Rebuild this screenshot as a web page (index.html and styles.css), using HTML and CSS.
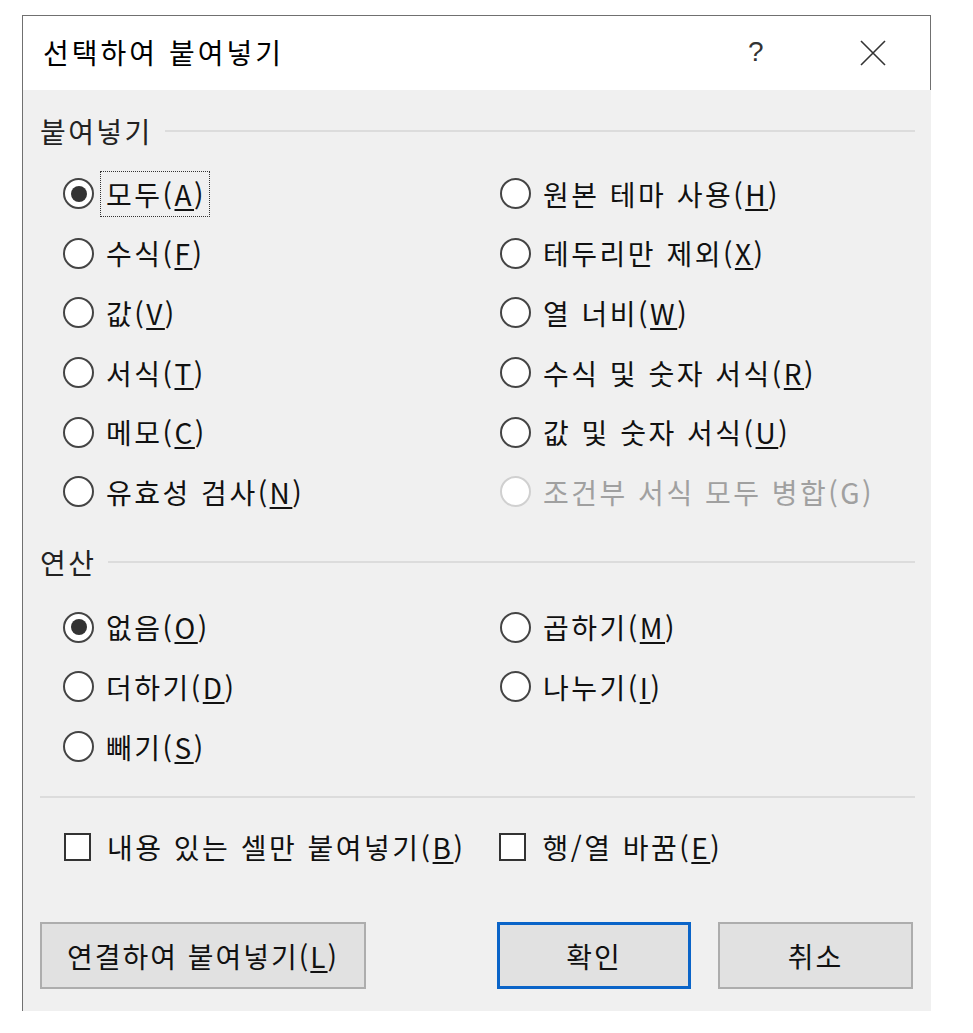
FILE: index.html
```html
<!DOCTYPE html>
<html lang="ko">
<head>
<meta charset="utf-8">
<title>선택하여 붙여넣기</title>
<link rel="stylesheet" href="styles.css">
</head>
<body>
<div class="dialog">
  <div class="titlebar">
    <div class="title">선택하여 붙여넣기</div>
    <div class="help">?</div>
    <div class="close">
      <svg width="26" height="26" viewBox="0 0 26 26"><path d="M1 1 L25 25 M25 1 L1 25" stroke="#333" stroke-width="1.6" fill="none"/></svg>
    </div>
  </div>
  <div class="body">
    <div class="section-head"><span class="section-label">붙여넣기</span><span class="rule"></span></div>
    <div class="grid grid-paste">
      <div class="opt"><span class="radio checked"></span><span class="label focus">모두(<u>A</u>)</span></div>
      <div class="opt"><span class="radio"></span><span class="label">원본 테마 사용(<u>H</u>)</span></div>
      <div class="opt"><span class="radio"></span><span class="label">수식(<u>F</u>)</span></div>
      <div class="opt"><span class="radio"></span><span class="label">테두리만 제외(<u>X</u>)</span></div>
      <div class="opt"><span class="radio"></span><span class="label">값(<u>V</u>)</span></div>
      <div class="opt"><span class="radio"></span><span class="label">열 너비(<u>W</u>)</span></div>
      <div class="opt"><span class="radio"></span><span class="label">서식(<u>T</u>)</span></div>
      <div class="opt"><span class="radio"></span><span class="label">수식 및 숫자 서식(<u>R</u>)</span></div>
      <div class="opt"><span class="radio"></span><span class="label">메모(<u>C</u>)</span></div>
      <div class="opt"><span class="radio"></span><span class="label">값 및 숫자 서식(<u>U</u>)</span></div>
      <div class="opt"><span class="radio"></span><span class="label">유효성 검사(<u>N</u>)</span></div>
      <div class="opt disabled"><span class="radio"></span><span class="label">조건부 서식 모두 병합(G)</span></div>
    </div>
    <div class="section-head second"><span class="section-label">연산</span><span class="rule"></span></div>
    <div class="grid grid-op">
      <div class="opt"><span class="radio checked"></span><span class="label">없음(<u>O</u>)</span></div>
      <div class="opt"><span class="radio"></span><span class="label">곱하기(<u>M</u>)</span></div>
      <div class="opt"><span class="radio"></span><span class="label">더하기(<u>D</u>)</span></div>
      <div class="opt"><span class="radio"></span><span class="label">나누기(<u>I</u>)</span></div>
      <div class="opt"><span class="radio"></span><span class="label">빼기(<u>S</u>)</span></div>
    </div>
    <div class="separator"></div>
    <div class="checks">
      <div class="chk"><span class="box"></span><span class="chk-label">내용 있는 셀만 붙여넣기(<u>B</u>)</span></div>
      <div class="chk"><span class="box"></span><span class="chk-label">행/열 바꿈(<u>E</u>)</span></div>
    </div>
    <div class="buttons">
      <button class="btn btn-link">연결하여 붙여넣기(<u>L</u>)</button>
      <span class="spacer"></span>
      <button class="btn btn-ok">확인</button>
      <button class="btn btn-cancel">취소</button>
    </div>
  </div>
</div>
</body>
</html>
```
FILE: styles.css
```css
* { box-sizing: border-box; }
html, body { margin: 0; padding: 0; background: #ffffff; }
body {
  font-family: "Noto Sans CJK KR", "Noto Sans", "Liberation Sans", sans-serif;
  color: #111;
}
.dialog {
  margin: 15px 0 0 22px;
  width: 909px;
  border-left: 1px solid #707070;
  border-top: 1px solid #707070;
}
.titlebar {
  height: 74px;
  background: #fff;
  border-right: 1px solid #707070;
  display: flex;
  align-items: center;
  padding-left: 20px;
}
.title {
  font-size: 28px;
  letter-spacing: 3px;
  color: #000;
  flex: 1;
  line-height: 1;
  margin-top: -2px;
}
.help {
  font-size: 28px;
  font-family: "Liberation Sans", sans-serif;
  color: #333;
  width: 30px;
  margin-right: 82px;
  line-height: 1;
  margin-top: -2px;
}
.close {
  width: 26px;
  height: 26px;
  margin-right: 44px;
  display: flex;
}
.body {
  background: #f0f0f0;
  padding: 21px 16px 22px 17px;
}
.section-head {
  height: 40px;
  display: flex;
  align-items: center;
  gap: 12px;
}
.section-head.second { margin-top: 20px; }
.section-label {
  font-size: 28px;
  letter-spacing: 2.4px;
  color: #222;
  line-height: 1;
}
.rule {
  flex: 1;
  height: 2px;
  background: #dcdcdc;
}
.grid {
  display: grid;
  grid-template-columns: 437px 1fr;
  grid-auto-rows: 59.6px;
  margin-left: 23px;
}
.grid-paste { margin-top: 13px; }
.grid-op { margin-top: 16px; }
.opt {
  display: flex;
  align-items: center;
}
.radio {
  width: 31px;
  height: 31px;
  border-radius: 50%;
  border: 2px solid #444;
  background: #fff;
  flex: none;
  display: flex;
  align-items: center;
  justify-content: center;
}
.radio.checked::after {
  content: "";
  width: 16px;
  height: 16px;
  border-radius: 50%;
  background: #333;
}
.label {
  font-size: 28px;
  letter-spacing: 2.5px;
  color: #111;
  margin-left: 6px;
  padding: 0 5px;
  height: 46px;
  display: inline-flex;
  align-items: center;
  border: 1px dotted transparent;
  line-height: 1;
}
.label.focus { border-color: #333; padding-right: 3px; }
.label u { text-underline-offset: 3px; text-decoration-thickness: 1.5px; }
.opt.disabled .radio { border-color: #d0d0d0; }
.opt.disabled .label { color: #a0a0a0; }
.separator {
  margin-top: 20px;
  height: 2px;
  background: #dcdcdc;
}
.checks {
  margin-top: 24px;
  height: 50px;
  display: flex;
  align-items: center;
  margin-left: 24px;
}
.chk {
  display: flex;
  align-items: center;
}
.chk + .chk { margin-left: 34px; }
.box {
  width: 27px;
  height: 28px;
  border: 2px solid #333;
  background: #fff;
  flex: none;
}
.chk-label {
  font-size: 28px;
  letter-spacing: 2.5px;
  margin-left: 16px;
  color: #111;
  line-height: 1;
}
.chk-label u, .btn u { text-underline-offset: 3px; text-decoration-thickness: 1.5px; }
.buttons {
  margin-top: 50px;
  display: flex;
  align-items: stretch;
  height: 67px;
  margin-right: 2px;
}
.spacer { flex: 1; }
.btn {
  font-family: inherit;
  font-size: 28px;
  letter-spacing: 2px;
  color: #111;
  background: #e1e1e1;
  border: 2px solid #adadad;
  padding: 0;
  line-height: 1;
}
.btn-link { width: 326px; }
.btn-ok { width: 194px; border: 3px solid #0a64c8; }
.btn-cancel { width: 195px; margin-left: 27px; }
```
